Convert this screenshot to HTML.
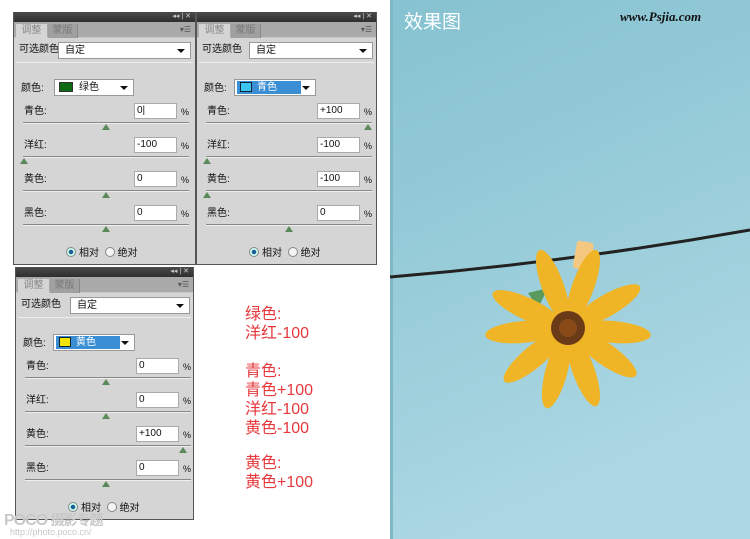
<!DOCTYPE html>
<html><head><meta charset="utf-8">
<style>
*{margin:0;padding:0;box-sizing:border-box}
body{width:750px;height:539px;background:#fff;position:relative;overflow:hidden;font-family:"Liberation Sans","Noto Sans CJK SC",sans-serif;}
.p{position:absolute;width:183px;height:253px;background:#d5d5d5;border:1px solid #555;border-top:none;font-size:10px;color:#111;line-height:12px}
.p .hd{position:absolute;left:0;top:0;width:100%;height:10px;background:linear-gradient(#4a4a4a,#2e2e2e);}
.p .hd span{position:absolute;right:4px;top:0;color:#ccc;font-size:7px;line-height:10px}
.p .tb{position:absolute;left:0;top:10px;width:100%;height:16px;background:#a9a9a9;border-bottom:1px solid #c8c8c8}
.p .t1{position:absolute;left:2px;top:2px;width:31px;height:14px;background:#d5d5d5;color:#888;font-size:10px;line-height:14px;text-align:center}
.p .t2{position:absolute;left:34px;top:2px;width:30px;height:14px;background:#a0a0a0;color:#777;font-size:10px;line-height:14px;text-align:center;border-right:1px solid #888}
.p .mn{position:absolute;right:4px;top:2px;color:#555;font-size:8px}
.ab{position:absolute}
.sel{position:absolute;background:#fff;border:1px solid #999;height:17px;font-size:10px;line-height:15px;padding-left:6px}
.sel i{position:absolute;right:5px;top:6px;width:0;height:0;border-left:4px solid transparent;border-right:4px solid transparent;border-top:4px solid #111}
.sep{position:absolute;left:2px;right:2px;top:50px;height:1px;background:#999;border-bottom:1px solid #eee}
.in{position:absolute;left:120px;width:43px;height:16px;background:#fff;border:1px solid #aaa;font-size:10px;line-height:14px;padding-left:2px}
.pc{position:absolute;left:167px;font-size:9px}
.ln{position:absolute;left:9px;width:166px;height:2px;background:#888;border-bottom:1px solid #eee}
.th{position:absolute;width:0;height:0;border-left:4px solid transparent;border-right:4px solid transparent;border-bottom:6px solid #5a8a5a}
.rd{position:absolute;top:235px;left:52px;font-size:10px}
.rd b{display:inline-block;width:10px;height:10px;border-radius:50%;border:1px solid #888;vertical-align:-1px;margin-right:3px;background:#f4f4f4}
.rd b.on{background:radial-gradient(#1d5d9a 35%,#cfe 45%)}
.red{position:absolute;left:245px;color:#e6393d;font-size:16px;line-height:19px}
</style></head><body>

<svg class="ab" style="left:390px;top:0" width="360" height="539">
<defs><linearGradient id="bg" x1="0" y1="0" x2="0.3" y2="1"><stop offset="0" stop-color="#86c2d1"/><stop offset="0.5" stop-color="#98ccd9"/><stop offset="1" stop-color="#acd8e3"/></linearGradient></defs>
<rect width="360" height="539" fill="url(#bg)"/>
<rect x="0" width="3" height="539" fill="#7fb8c7"/>
<path d="M0 277 Q180 262 360 230" stroke="#222" stroke-width="3" fill="none"/>
<text x="14" y="28" fill="#fff" font-size="19" font-family="Noto Sans CJK SC,sans-serif">效果图</text>
<text x="230" y="21" fill="#111" font-size="13" font-style="italic" font-weight="bold" font-family="Liberation Serif,serif">www.Psjia.com</text>
<g transform="translate(178,328)">
<path d="M-30 -20 L-40 -35 L-20 -40 Z" fill="#5a9a5a"/>
<rect x="-6" y="-88" width="17" height="28" rx="3" fill="#f4c880" transform="rotate(10)"/>
<g fill="#f0b526">
<ellipse cx="0" cy="-45" rx="11" ry="38" transform="rotate(-20)"/>
<ellipse cx="0" cy="-45" rx="11" ry="38" transform="rotate(20)"/>
<ellipse cx="0" cy="-45" rx="11" ry="38" transform="rotate(60)"/>
<ellipse cx="0" cy="-45" rx="11" ry="38" transform="rotate(95)"/>
<ellipse cx="0" cy="-45" rx="11" ry="38" transform="rotate(125)"/>
<ellipse cx="0" cy="-45" rx="11" ry="38" transform="rotate(160)"/>
<ellipse cx="0" cy="-45" rx="11" ry="38" transform="rotate(195)"/>
<ellipse cx="0" cy="-45" rx="11" ry="38" transform="rotate(230)"/>
<ellipse cx="0" cy="-45" rx="11" ry="38" transform="rotate(265)"/>
<ellipse cx="0" cy="-45" rx="11" ry="38" transform="rotate(295)"/>
</g>
<circle r="17" fill="#6b3a16"/><circle r="9" fill="#8a4a18"/>
</g>
</svg>

<div class="p" style="left:13px;top:12px">
<div class="hd"><span>◂◂ | ✕</span></div>
<div class="tb"><div class="t1">调整</div><div class="t2">蒙版</div><div class="mn">▾☰</div></div>
<div class="ab" style="left:5px;top:32px">可选颜色</div>
<div class="sel" style="left:44px;top:30px;width:133px">自定<i></i></div>
<div class="sep"></div>
<div class="ab" style="left:7px;top:71px">颜色:</div>
<div class="sel" style="left:40px;top:67px;width:80px;padding-left:24px"><span style="position:absolute;left:4px;top:2px;width:14px;height:10px;background:#0d6a12;border:1px solid #333"></span>绿色<i></i></div>
<div class="ab" style="left:10px;top:94px">青色:</div><div class="in" style="top:91px">0|</div><div class="pc" style="top:94px">%</div><div class="ln" style="top:110px"></div><div class="th" style="left:88px;top:112px"></div>
<div class="ab" style="left:10px;top:128px">洋红:</div><div class="in" style="top:125px">-100</div><div class="pc" style="top:128px">%</div><div class="ln" style="top:144px"></div><div class="th" style="left:6px;top:146px"></div>
<div class="ab" style="left:10px;top:162px">黄色:</div><div class="in" style="top:159px">0</div><div class="pc" style="top:162px">%</div><div class="ln" style="top:178px"></div><div class="th" style="left:88px;top:180px"></div>
<div class="ab" style="left:10px;top:196px">黑色:</div><div class="in" style="top:193px">0</div><div class="pc" style="top:196px">%</div><div class="ln" style="top:212px"></div><div class="th" style="left:88px;top:214px"></div>
<div class="rd"><b class="on"></b>相对 &nbsp;<b></b>绝对</div>
</div>

<div class="p" style="left:196px;top:12px;width:181px">
<div class="hd"><span>◂◂ | ✕</span></div>
<div class="tb"><div class="t1">调整</div><div class="t2">蒙版</div><div class="mn">▾☰</div></div>
<div class="ab" style="left:5px;top:32px">可选颜色</div>
<div class="sel" style="left:52px;top:30px;width:124px">自定<i></i></div>
<div class="sep"></div>
<div class="ab" style="left:7px;top:71px">颜色:</div>
<div class="sel" style="left:37px;top:67px;width:82px;padding-left:2px"><span style="display:inline-block;width:64px;height:13px;background:#3a8fd4;color:#fff;padding-left:20px;line-height:13px;position:relative;margin-top:1px"><span style="position:absolute;left:3px;top:1px;width:12px;height:10px;background:#3cc4f0;border:1px solid #123"></span>青色</span><i></i></div>
<div class="ab" style="left:10px;top:94px">青色:</div><div class="in" style="top:91px">+100</div><div class="pc" style="top:94px">%</div><div class="ln" style="top:110px"></div><div class="th" style="left:167px;top:112px"></div>
<div class="ab" style="left:10px;top:128px">洋红:</div><div class="in" style="top:125px">-100</div><div class="pc" style="top:128px">%</div><div class="ln" style="top:144px"></div><div class="th" style="left:6px;top:146px"></div>
<div class="ab" style="left:10px;top:162px">黄色:</div><div class="in" style="top:159px">-100</div><div class="pc" style="top:162px">%</div><div class="ln" style="top:178px"></div><div class="th" style="left:6px;top:180px"></div>
<div class="ab" style="left:10px;top:196px">黑色:</div><div class="in" style="top:193px">0</div><div class="pc" style="top:196px">%</div><div class="ln" style="top:212px"></div><div class="th" style="left:88px;top:214px"></div>
<div class="rd"><b class="on"></b>相对 &nbsp;<b></b>绝对</div>
</div>

<div class="p" style="left:15px;top:267px;width:179px">
<div class="hd"><span>◂◂ | ✕</span></div>
<div class="tb"><div class="t1">调整</div><div class="t2">蒙版</div><div class="mn">▾☰</div></div>
<div class="ab" style="left:5px;top:32px">可选颜色</div>
<div class="sel" style="left:54px;top:30px;width:120px">自定<i></i></div>
<div class="sep"></div>
<div class="ab" style="left:7px;top:71px">颜色:</div>
<div class="sel" style="left:37px;top:67px;width:82px;padding-left:2px"><span style="display:inline-block;width:64px;height:13px;background:#3a8fd4;color:#fff;padding-left:20px;line-height:13px;position:relative;margin-top:1px"><span style="position:absolute;left:3px;top:1px;width:12px;height:10px;background:#f2e600;border:1px solid #123"></span>黄色</span><i></i></div>
<div class="ab" style="left:10px;top:94px">青色:</div><div class="in" style="top:91px">0</div><div class="pc" style="top:94px">%</div><div class="ln" style="top:110px"></div><div class="th" style="left:86px;top:112px"></div>
<div class="ab" style="left:10px;top:128px">洋红:</div><div class="in" style="top:125px">0</div><div class="pc" style="top:128px">%</div><div class="ln" style="top:144px"></div><div class="th" style="left:86px;top:146px"></div>
<div class="ab" style="left:10px;top:162px">黄色:</div><div class="in" style="top:159px">+100</div><div class="pc" style="top:162px">%</div><div class="ln" style="top:178px"></div><div class="th" style="left:163px;top:180px"></div>
<div class="ab" style="left:10px;top:196px">黑色:</div><div class="in" style="top:193px">0</div><div class="pc" style="top:196px">%</div><div class="ln" style="top:212px"></div><div class="th" style="left:86px;top:214px"></div>
<div class="rd"><b class="on"></b>相对 &nbsp;<b></b>绝对</div>
</div>
<div class="ab" style="left:4px;top:510px;color:#c8c8c8;font-size:16px;font-weight:bold;letter-spacing:-1px">POCO <span style="font-size:14px">摄影专题</span></div>
<div class="ab" style="left:10px;top:527px;color:#c8c8c8;font-size:9px">http://photo.poco.cn/</div>

<div class="red" style="top:305px">绿色:<br>洋红-100</div>
<div class="red" style="top:362px">青色:<br>青色+100<br>洋红-100<br>黄色-100</div>
<div class="red" style="top:454px">黄色:<br>黄色+100</div>
</body></html>
